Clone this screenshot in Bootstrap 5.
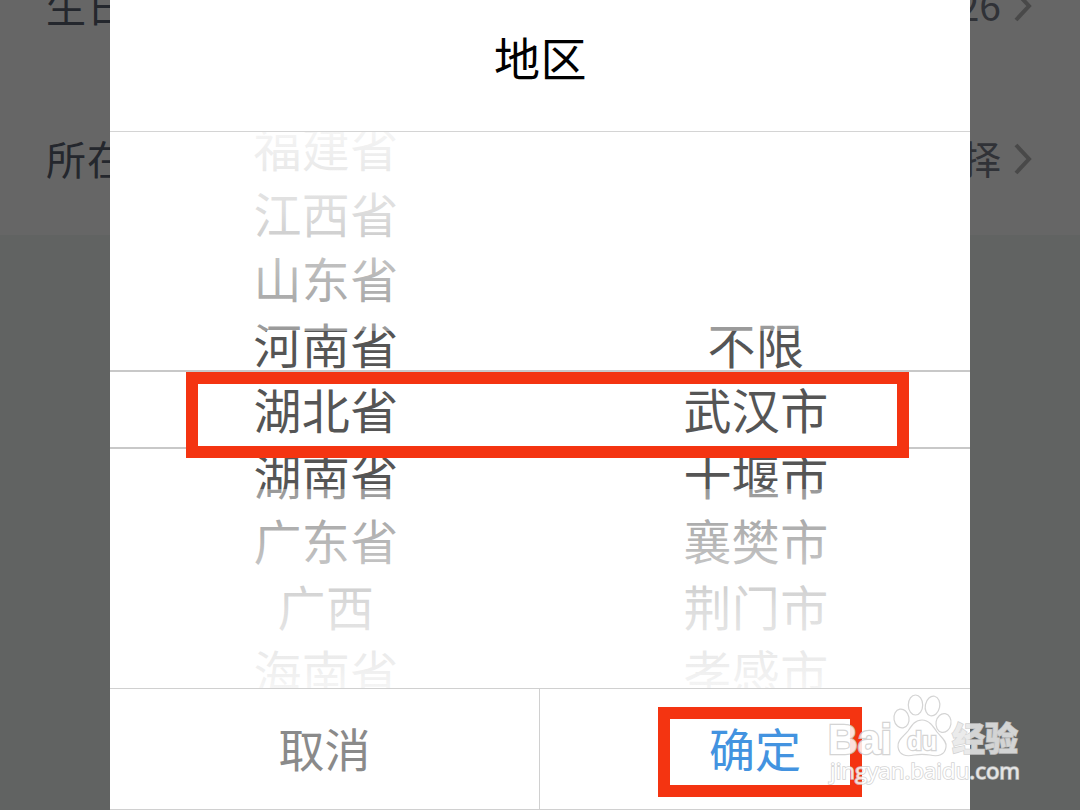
<!DOCTYPE html>
<html lang="zh-CN">
<head>
    <meta charset="UTF-8">
    <meta name="viewport" content="width=device-width, initial-scale=1.0">
    <title>地区</title>
    <link href="https://cdn.jsdelivr.net/npm/bootstrap@5.3.0/dist/css/bootstrap.min.css" rel="stylesheet">
    <style>
        body {
            height: 810px;
            background: #616362;
            font-family: "Noto Sans CJK SC", sans-serif;
        }
        /* dimmed settings list behind the dialog */
        .settings {
            height: 235px;
            background: #666;
        }
        .setting-row {
            height: 151px;
            padding: 0 48px 4px 46px;
            font-size: 40px;
            letter-spacing: 1px;
            color: #24272d;
        }
        .setting-row:first-child {
            padding-bottom: 8px;
        }
        .setting-value {
            font-size: 39px;
            color: #303237;
            letter-spacing: 0;
        }
        .chevron {
            margin: 3px 0 0 13px;
        }
        .picker-dialog {
            left: 110px;
            width: 860px;
            background: #fff;
        }
        .picker-title {
            height: 132px;
            padding: 0 0 18px 1px;
            border-bottom: 1px solid #d4d4d4;
            font-size: 46px;
            letter-spacing: .6px;
            color: #000;
        }
        .wheels {
            height: 556px;
        }
        .wheel {
            padding: 0 0 2px 2px;
            font-size: 48px;
            letter-spacing: .4px;
            color: #555;
        }
        .wheel-item {
            flex: 0 0 65.5px;
            line-height: 65.5px;
        }
        .fade-top,
        .fade-bottom {
            height: 199px;
        }
        .fade-top {
            background: linear-gradient(to top, rgba(255, 255, 255, .4), rgba(255, 255, 255, .8) 60%, rgba(255, 255, 255, .94));
        }
        .fade-bottom {
            background: linear-gradient(to bottom, rgba(255, 255, 255, .4), rgba(255, 255, 255, .8) 60%, rgba(255, 255, 255, .94));
        }
        .selected-band {
            top: 238px;
            height: 79px;
            border: solid #c8c8c8;
            border-width: 2px 0;
        }
        .marker {
            border: 12px solid #f43411;
        }
        .marker-row {
            left: 76px;
            top: 240px;
            width: 723px;
            height: 86px;
        }
        .marker-ok {
            left: 118px;
            top: 18px;
            width: 204px;
            height: 90px;
        }
        .picker-actions {
            height: 122px;
            border: solid #d0d0d0;
            border-width: 1px 0;
            font-size: 46px;
        }
        .picker-action {
            padding-bottom: 4px;
        }
        .action-cancel {
            border-right: 1px solid #d0d0d0;
            color: #8a8a8a;
        }
        .action-ok {
            color: #4393e0;
        }
        .watermark {
            left: 820px;
            top: 680px;
        }
        .watermark text {
            paint-order: stroke;
        }
    </style>
</head>
<body class="position-relative overflow-hidden">
    <div class="settings d-flex flex-column justify-content-end overflow-hidden">
        <div class="setting-row d-flex flex-shrink-0 align-items-center justify-content-between">
            <span>生日</span>
            <span class="setting-value d-flex align-items-center">26
                <svg class="chevron" width="18" height="34" viewBox="0 0 18 34"><path d="M2 3 L15 17 L2 31" fill="none" stroke="#494949" stroke-width="4"/></svg>
            </span>
        </div>
        <div class="setting-row d-flex flex-shrink-0 align-items-center justify-content-between">
            <span>所在</span>
            <span class="setting-value d-flex align-items-center">择
                <svg class="chevron" width="18" height="34" viewBox="0 0 18 34"><path d="M2 3 L15 17 L2 31" fill="none" stroke="#494949" stroke-width="4"/></svg>
            </span>
        </div>
    </div>

    <div class="picker-dialog position-absolute top-0 d-flex flex-column">
        <div class="picker-title d-flex align-items-center justify-content-center">地区</div>

        <div class="wheels position-relative">
            <div class="row g-0 h-100 overflow-hidden text-center">
                <div class="col-6 h-100 wheel d-flex flex-column justify-content-center">
                    <div class="wheel-item">福建省</div>
                    <div class="wheel-item">江西省</div>
                    <div class="wheel-item">山东省</div>
                    <div class="wheel-item">河南省</div>
                    <div class="wheel-item">湖北省</div>
                    <div class="wheel-item">湖南省</div>
                    <div class="wheel-item">广东省</div>
                    <div class="wheel-item">广西</div>
                    <div class="wheel-item">海南省</div>
                </div>
                <div class="col-6 h-100 wheel d-flex flex-column justify-content-center">
                    <div class="wheel-item"></div>
                    <div class="wheel-item"></div>
                    <div class="wheel-item"></div>
                    <div class="wheel-item">不限</div>
                    <div class="wheel-item">武汉市</div>
                    <div class="wheel-item">十堰市</div>
                    <div class="wheel-item">襄樊市</div>
                    <div class="wheel-item">荆门市</div>
                    <div class="wheel-item">孝感市</div>
                </div>
            </div>
            <div class="fade-top position-absolute top-0 start-0 w-100"></div>
            <div class="fade-bottom position-absolute bottom-0 start-0 w-100"></div>
            <div class="selected-band position-absolute start-0 w-100"></div>
            <div class="marker marker-row position-absolute"></div>
        </div>

        <div class="picker-actions d-flex">
            <div class="picker-action action-cancel w-50 d-flex align-items-center justify-content-center">取消</div>
            <div class="picker-action action-ok w-50 d-flex align-items-center justify-content-center position-relative">
                确定
                <div class="marker marker-ok position-absolute"></div>
            </div>
        </div>
    </div>

    <svg class="watermark position-absolute" width="220" height="120" viewBox="0 0 220 120" opacity=".85">
        <g fill="#fff" stroke="#cdcdcd" stroke-width="1.2">
            <ellipse cx="81.500" cy="38.500" rx="7.500" ry="9.500" transform="rotate(-10 81.500 38.500)"/>
            <ellipse cx="95.500" cy="25" rx="7.200" ry="10"/>
            <ellipse cx="112.500" cy="26" rx="7.200" ry="10" transform="rotate(12 112.500 26)"/>
            <ellipse cx="123.500" cy="43" rx="7.500" ry="9.500" transform="rotate(10 123.500 43)"/>
            <path d="M102 40 C109 40 113 46 117 52 C121 57 127 61 126 67 C125 75 118 77 110 75 C104 74 100 74 94 75 C86 77 79 75 78 67 C77 60 84 56 88 51 C92 45 95 40 102 40 Z"/>
            <g font-family="'Liberation Sans', sans-serif" font-weight="bold">
                <text x="8" y="74" font-size="42" stroke-width="2.500" textLength="64" lengthAdjust="spacingAndGlyphs">Bai</text>
                <text x="87" y="70" font-size="25" stroke-width="2.500" textLength="30" lengthAdjust="spacingAndGlyphs">du</text>
            </g>
            <text x="132" y="71" font-family="'Noto Sans CJK SC', sans-serif" font-weight="900" font-size="33" fill="#e8e8e8" stroke-width="1.5">经验</text>
            <text x="10" y="99" font-family="'Open Sans', sans-serif" font-size="22" stroke-width="1.6" textLength="190" lengthAdjust="spacingAndGlyphs">jingyan.baidu.com</text>
        </g>
    </svg>

    <script src="https://cdn.jsdelivr.net/npm/bootstrap@5.3.0/dist/js/bootstrap.bundle.min.js"></script>
</body>
</html>
